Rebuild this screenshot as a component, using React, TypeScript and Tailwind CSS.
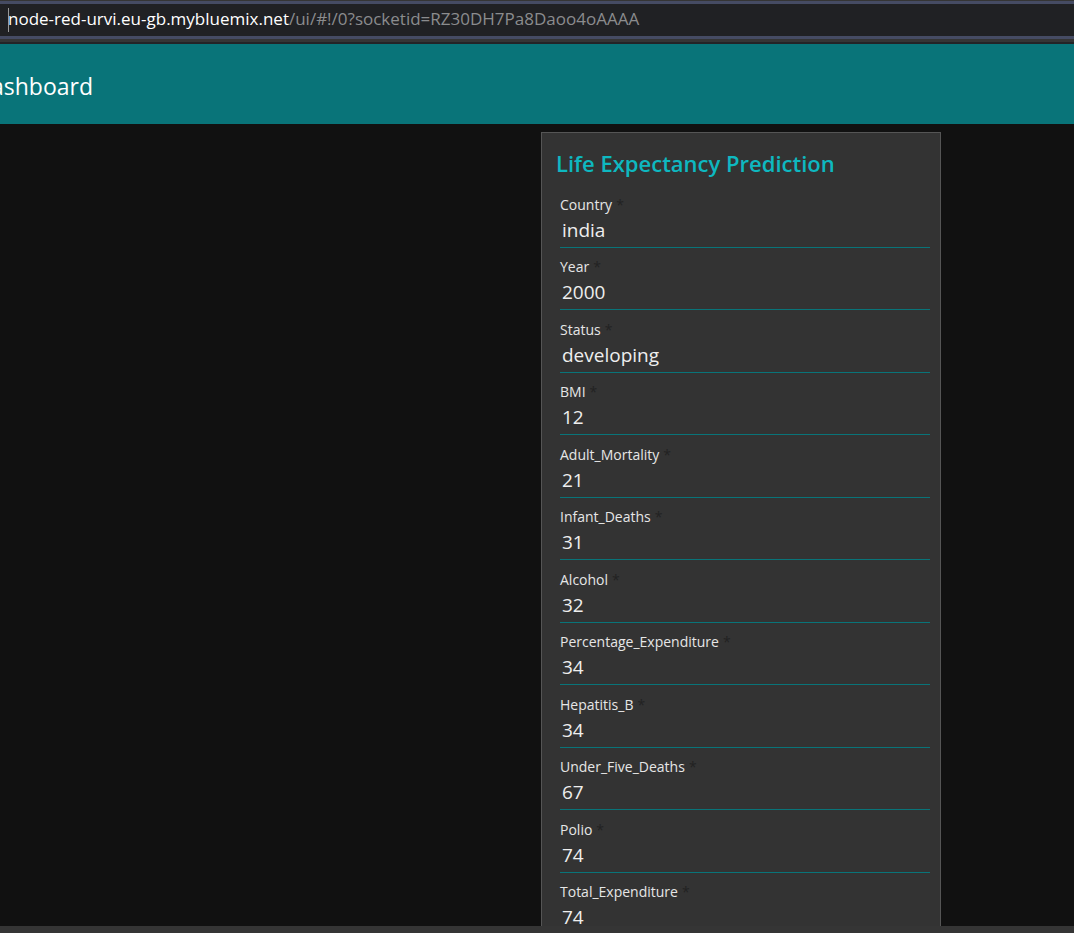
const fields = [
  { name: "Country", value: "india" },
  { name: "Year", value: "2000" },
  { name: "Status", value: "developing" },
  { name: "BMI", value: "12" },
  { name: "Adult_Mortality", value: "21" },
  { name: "Infant_Deaths", value: "31" },
  { name: "Alcohol", value: "32" },
  { name: "Percentage_Expenditure", value: "34" },
  { name: "Hepatitis_B", value: "34" },
  { name: "Under_Five_Deaths", value: "67" },
  { name: "Polio", value: "74" },
  { name: "Total_Expenditure", value: "74" },
];

function AddressBar() {
  return (
    <div className="shrink-0 border-b-2 border-[#232427] bg-[#353535] pt-px pb-[3px]">
      <div className="flex h-[38px] items-center border-y-[3px] border-[#454b63] bg-[#202124] pl-2">
        <span className="-mr-px h-6 w-px bg-[#9a9a9a]" />
        <a
          href="#!/0"
          className="whitespace-nowrap pb-0.5 text-[17px] leading-7 text-[#8b8c8e]"
        >
          <span className="text-white">node-red-urvi.eu-gb.mybluemix.net</span>
          /ui/#!/0?socketid=RZ30DH7Pa8Daoo4oAAAA
        </a>
      </div>
    </div>
  );
}

function Field({ name, value }: { name: string; value: string }) {
  return (
    <div className="flex h-[62px] flex-col justify-end odd:h-[63px]">
      <label htmlFor={name} className="text-sm leading-5 font-medium text-[#e6e6e6]">
        {name}
        <span className="pl-1 text-[#222222]">*</span>
      </label>
      <input
        id={name}
        defaultValue={value}
        required
        className="h-[33px] w-full border-b border-[#097479] bg-transparent px-0.5 pb-0.5 text-[19px] text-[#eeeeee] outline-none"
      />
    </div>
  );
}

export default function App() {
  return (
    <div className="flex h-screen flex-col overflow-hidden bg-[#111111] font-['Open_Sans','Noto_Sans',sans-serif]">
      <AddressBar />
      <header className="flex h-20 shrink-0 items-center bg-[#097479] pt-1">
        <h1 className="flex w-[93px] justify-end overflow-hidden text-[23px] whitespace-nowrap text-white">
          Dashboard
        </h1>
      </header>
      <main className="flex min-h-0 flex-1 justify-end overflow-hidden pt-2 pr-[133px]">
        <section className="h-max w-[400px] border border-[#555555] bg-[#333333] pr-[10px] pb-4 pl-[18px]">
          <h2 className="-ml-1 pt-3 text-[22px] leading-9 font-semibold whitespace-nowrap text-[#0eb8c0]">
            Life Expectancy Prediction
          </h2>
          <form className="pt-1">
            {fields.map((field) => (
              <Field key={field.name} {...field} />
            ))}
          </form>
        </section>
      </main>
      <footer className="h-[7px] shrink-0 bg-[#353535]" />
    </div>
  );
}
